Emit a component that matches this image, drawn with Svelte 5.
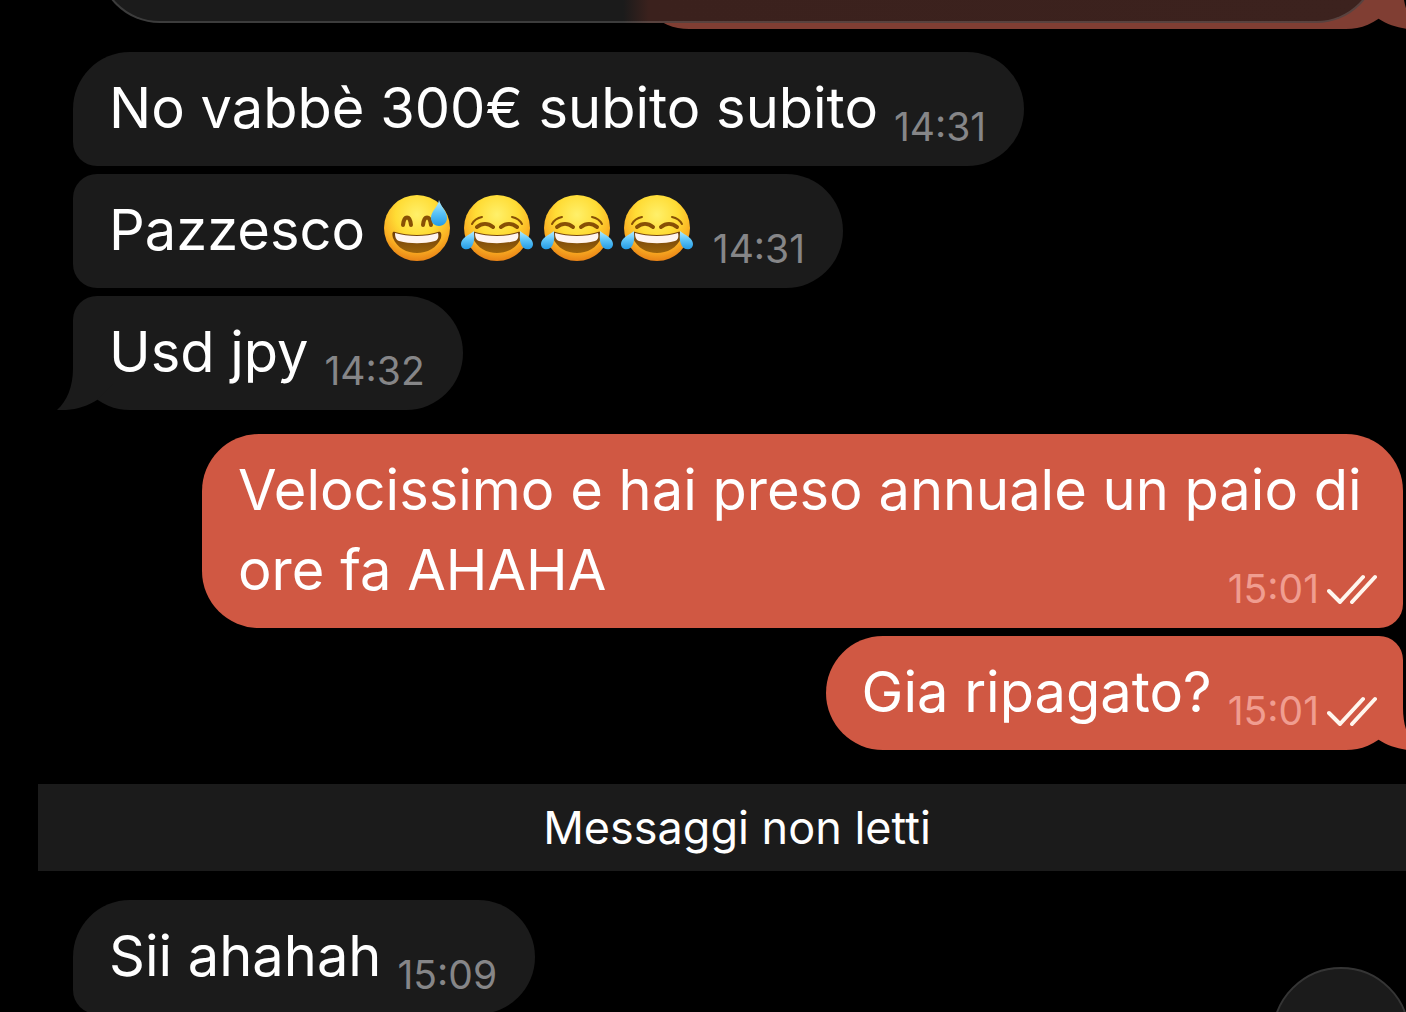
<script lang="ts">
  type Message = {
    text: string;
    time: string;
    out?: boolean;
    first?: boolean;
    last?: boolean;
    emojis?: string[];
  };

  const earlier: Message[] = [
    { text: "No vabbè 300€ subito subito", time: "14:31", first: true },
    { text: "Pazzesco", time: "14:31", emojis: ["sweat", "joy", "joy", "joy"] },
    { text: "Usd jpy", time: "14:32", last: true },
    { text: "Velocissimo e hai preso annuale un paio di ore fa AHAHA", time: "15:01", out: true, first: true },
    { text: "Gia ripagato?", time: "15:01", out: true, last: true },
  ];

  const unread: Message[] = [{ text: "Sii ahahah", time: "15:09", first: true }];

  const emojiNames: Record<string, string> = { sweat: "😅", joy: "😂" };
</script>

{#snippet tail()}
  <svg class="tail" viewBox="0 0 56 56" aria-hidden="true">
    <path d="M16 0V14C16 33 10 47 0 56C15 57 29 53 40 46L56 30V0Z" />
  </svg>
{/snippet}

{#snippet bubble(message: Message)}
  <div class="row" class:out={message.out} class:first={message.first} class:last={message.last}>
    <div class="bubble">
      {#if message.last}{@render tail()}{/if}
      <span class="text">{message.text}</span>
      {#if message.emojis}
        <span class="emojis">
          {#each message.emojis as name}
            <svg viewBox="0 0 80 80" role="img" aria-label={emojiNames[name]}><use href="#{name}" /></svg>
          {/each}
        </span>
      {/if}
      <span class="meta">
        <time>{message.time}</time>
        {#if message.out}
          <svg class="checks" viewBox="0 0 50 30" aria-hidden="true">
            <path d="M2 17L13 28L36 3M25 28L48 3" />
          </svg>
        {/if}
      </span>
    </div>
  </div>
{/snippet}

<svg class="defs" aria-hidden="true">
  <defs>
    <radialGradient id="face" cx="50%" cy="30%" r="72%">
      <stop offset="0" stop-color="#fff06a" />
      <stop offset="0.45" stop-color="#ffdc35" />
      <stop offset="0.75" stop-color="#fbb023" />
      <stop offset="1" stop-color="#e57c14" />
    </radialGradient>
    <linearGradient id="drop" x1="0" y1="0" x2="0" y2="1">
      <stop offset="0" stop-color="#b5edff" />
      <stop offset="0.5" stop-color="#5cc3f7" />
      <stop offset="1" stop-color="#239be5" />
    </linearGradient>
    <linearGradient id="mouth" x1="0" y1="0" x2="0" y2="1">
      <stop offset="0" stop-color="#6d3c08" />
      <stop offset="1" stop-color="#9d650b" />
    </linearGradient>
    <symbol id="grin" viewBox="0 0 80 80">
      <circle cx="40" cy="40" r="33" fill="url(#face)" />
      <path d="M18 44C31 48 49 48 61 44C64 43 65 46 64 50C60 60 50 65 40 65S20 60 16 50C15 46 15 43 18 44Z" fill="url(#mouth)" />
      <path d="M18 45C31 49 49 49 61 45C62 49 61 52 58 53C47 56 33 56 22 53C19 52 18 49 18 45Z" fill="#fff4ef" />
    </symbol>
    <symbol id="sweat" viewBox="0 0 80 80">
      <use href="#grin" />
      <path d="M26 37C27 27 33 27 34 37M46 37C47 27 53 27 54 37" fill="none" stroke="#875005" stroke-width="4" stroke-linecap="round" />
      <path d="M62 12C61 19 54 23 54 30C54 35 58 38 62 38C67 38 70 34 70 30C70 23 64 19 62 12Z" fill="url(#drop)" />
    </symbol>
    <symbol id="joy" viewBox="0 0 80 80">
      <use href="#grin" />
      <path d="M20 39C25 35 31 35 36 39M44 39C49 35 55 35 60 39" fill="none" stroke="#875005" stroke-width="4" stroke-linecap="round" />
      <path d="M15 36C17 32 20 30 25 29M65 36C63 32 60 30 55 29" fill="none" stroke="#875005" stroke-width="2" stroke-linecap="round" />
      <path d="M17 43C12 47 4 50 4 56C4 63 14 63 16 56C18 51 17 48 17 43ZM63 43C68 47 76 50 76 56C76 63 66 63 64 56C62 51 63 48 63 43Z" fill="url(#drop)" />
    </symbol>
  </defs>
</svg>

<main class="chat">
  <header class="pinned"></header>

  <div class="row out last previous">
    <div class="bubble">{@render tail()}</div>
  </div>

  <section class="messages">
    {#each earlier as message}
      {@render bubble(message)}
    {/each}
  </section>

  <h2 class="divider">Messaggi non letti</h2>

  <section class="messages">
    {#each unread as message}
      {@render bubble(message)}
    {/each}
  </section>

  <button class="scroll-down" type="button" aria-label="Vai in fondo"></button>
</main>

<style>
  :global(body) {
    background: #000;
  }

  .defs {
    position: absolute;
    width: 0;
    height: 0;
  }

  .chat {
    position: relative;
    box-sizing: border-box;
    height: 100vh;
    padding-left: 38px;
    overflow: hidden;
    background: #000;
    color: #fff;
    font-family: Inter, "Liberation Sans", sans-serif;
    font-size: 56px;
    line-height: 80px;
  }

  .pinned {
    position: absolute;
    z-index: 2;
    top: -100px;
    left: 98px;
    right: 28px;
    box-sizing: border-box;
    height: 123px;
    border: 2px solid rgba(255, 255, 255, 0.15);
    border-top: 0;
    border-radius: 62px;
    background: linear-gradient(90deg, #1b1b1b 41%, #3b211d 43%, #3c221e 100%);
  }

  .row {
    --fill: #1b1b1b;
    display: flex;
    padding: 0 3px 0 35px;
  }

  .row.out {
    --fill: #d05843;
    justify-content: flex-end;
  }

  .row.previous {
    --fill: #803e33;
    height: 29px;
    align-items: flex-end;
    overflow: hidden;
  }

  .previous .bubble {
    width: 58%;
    height: 114px;
    flex: none;
  }

  .messages {
    display: flex;
    flex-direction: column;
    gap: 8px;
    padding-top: 23px;
  }

  .messages .row.out.first {
    margin-top: 16px;
  }

  .bubble {
    position: relative;
    isolation: isolate;
    box-sizing: border-box;
    max-width: calc(100% - 129px);
    padding: 16px 38px 18px 36px;
    border-radius: 24px 57px 57px 24px;
    background: var(--fill);
  }

  .first .bubble {
    border-top-left-radius: 57px;
  }

  .last .bubble {
    border-bottom-left-radius: 57px;
  }

  .out .bubble {
    padding-right: 26px;
    border-radius: 57px 24px 24px 57px;
  }

  .out.first .bubble {
    border-top-right-radius: 57px;
  }

  .out.last .bubble {
    border-bottom-right-radius: 57px;
  }

  .tail {
    position: absolute;
    z-index: -1;
    bottom: 0;
    left: -16px;
    width: 56px;
    height: 56px;
    fill: var(--fill);
  }

  .out .tail {
    right: -16px;
    left: auto;
    transform: scaleX(-1);
  }

  .emojis {
    display: inline-flex;
    height: 80px;
    margin-left: -4px;
    vertical-align: top;
  }

  .emojis svg {
    width: 80px;
    height: 80px;
    margin-top: -2px;
  }

  .meta {
    float: right;
    display: flex;
    align-items: flex-end;
    gap: 8px;
    height: 80px;
    margin-left: 16px;
    color: #868688;
    font-size: 39px;
    line-height: 42px;
  }

  .out .meta {
    color: #f09d90;
  }

  .checks {
    width: 50px;
    height: 30px;
    margin-bottom: 6px;
    fill: none;
    stroke: #fff6ee;
    stroke-width: 4;
    stroke-linecap: round;
    stroke-linejoin: round;
  }

  .divider {
    margin: 34px 0 6px;
    padding-left: 30px;
    background: #1b1b1b;
    font-size: 45px;
    font-weight: 400;
    line-height: 87px;
    text-align: center;
  }

  .scroll-down {
    position: absolute;
    right: -4px;
    bottom: -93px;
    width: 138px;
    height: 138px;
    padding: 0;
    border: 2px solid #353535;
    border-radius: 50%;
    background: #1b1b1b;
    cursor: pointer;
  }
</style>
